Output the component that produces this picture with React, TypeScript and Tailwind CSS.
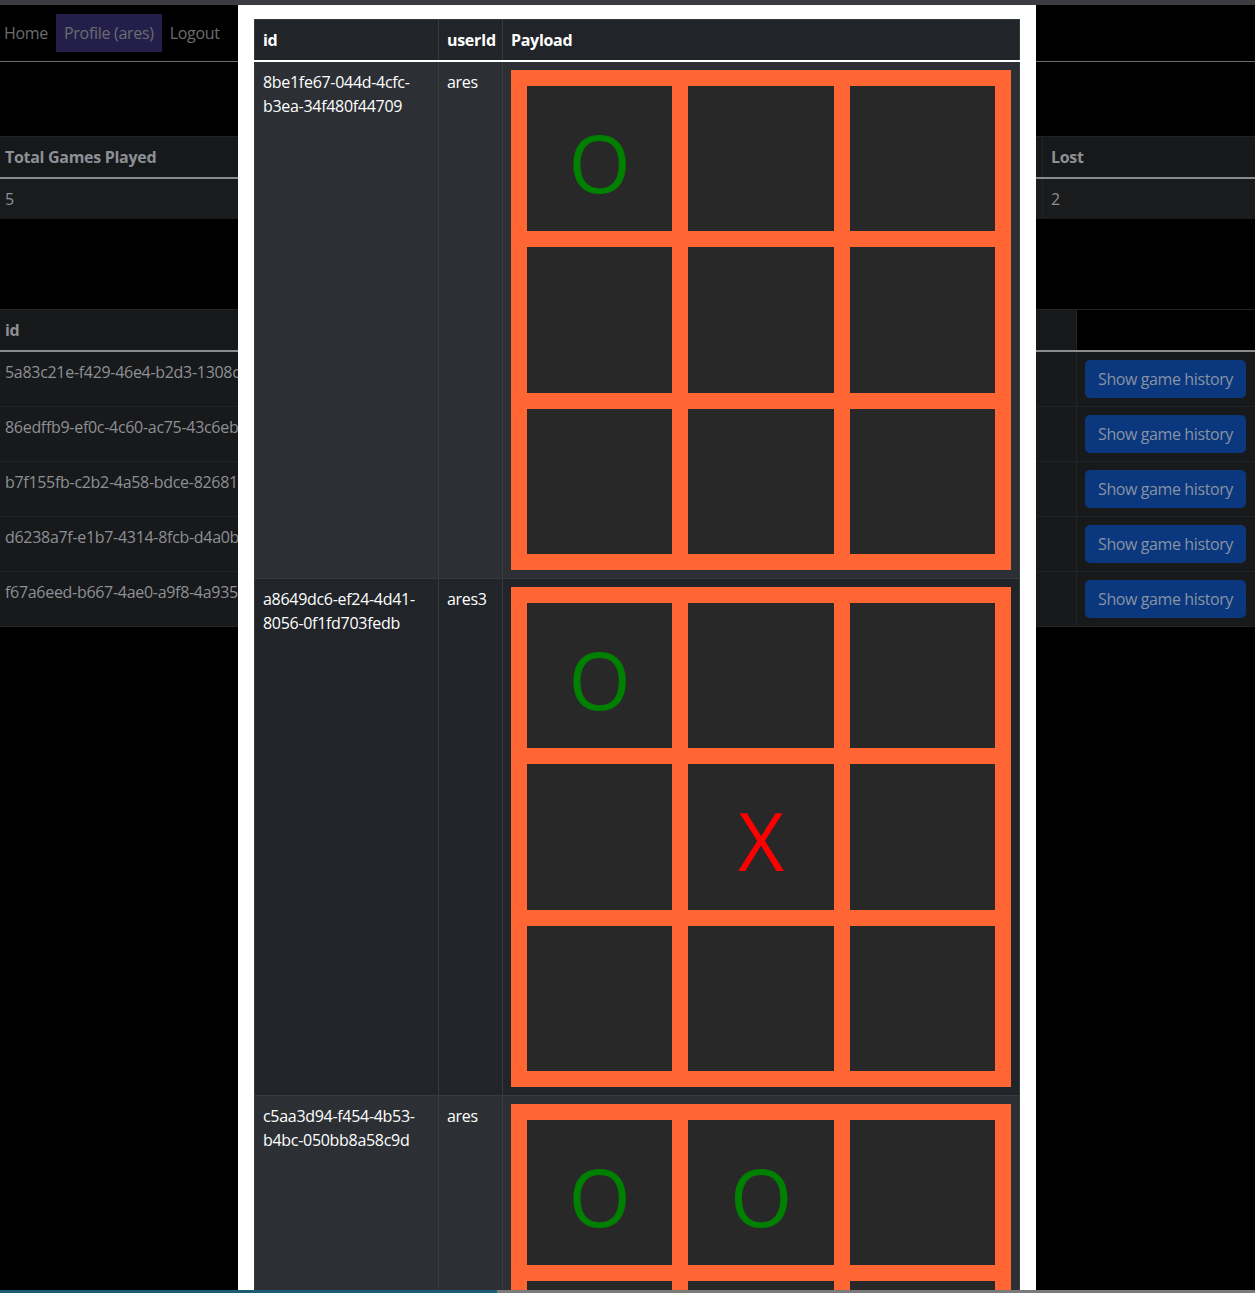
import React from "react";

const FONT = { fontFamily: '"Open Sans", "Noto Sans", sans-serif' };

const games = [
  { id: "8be1fe67-044d-4cfc-b3ea-34f480f44709", user: "ares", board: ["O", "", "", "", "", "", "", "", ""] },
  { id: "a8649dc6-ef24-4d41-8056-0f1fd703fedb", user: "ares3", board: ["O", "", "", "", "X", "", "", "", ""] },
  { id: "c5aa3d94-f454-4b53-b4bc-050bb8a58c9d", user: "ares", board: ["O", "O", "", "", "", "", "", "", ""] },
];

const bgIds = [
  "5a83c21e-f429-46e4-b2d3-1308c4a1e2f7",
  "86edffb9-ef0c-4c60-ac75-43c6eb91d0a2",
  "b7f155fb-c2b2-4a58-bdce-82681f3e0c4d",
  "d6238a7f-e1b7-4314-8fcb-d4a0b5c7e912",
  "f67a6eed-b667-4ae0-a9f8-4a935e2d7b10",
];

function Board({ cells }: { cells: string[] }) {
  return (
    <div className="w-[500px] h-[500px] bg-[#ff6633] p-4 grid grid-cols-3 grid-rows-3 gap-4">
      {cells.map((c, i) => (
        <div
          key={i}
          className={
            "bg-[#282828] flex items-center justify-center text-[80px] leading-none pt-[7px] tracking-normal " +
            (c === "X" ? "text-[#ff0000]" : "text-[#008000]")
          }
        >
          {c}
        </div>
      ))}
    </div>
  );
}

export default function App() {
  return (
    <div className="relative h-[1293px] overflow-hidden bg-black text-base tracking-[-0.3px]" style={FONT}>
      {/* top strip */}
      <div className="h-[5px] bg-[#3b3c3f]" />

      {/* nav */}
      <nav className="flex items-center pt-[9px] pb-[9px] border-b border-[#6e6e6e] -ml-[4px]">
        <a className="px-2 leading-6 py-[7px] text-[#6b6d70]">Home</a>
        <a className="px-2 leading-6 py-[7px] text-[#6b6d70] bg-[#241f4a]">Profile (ares)</a>
        <a className="px-2 leading-6 py-[7px] text-[#6b6d70]">Logout</a>
      </nav>

      {/* stats table */}
      <div className="mt-[74px] border-t border-[#222325]">
        <div className="grid grid-cols-[270px_390px_382px_1fr] bg-[#17181a] border-b-2 border-[#8a8b8c]">
          <div className="px-[5px] py-2 leading-6 font-bold text-[#8b9095]">Total Games Played</div>
          <div className="px-2 py-2 leading-6 font-bold text-[#8b9095] border-l border-[#222325]">Won</div>
          <div className="px-2 py-2 leading-6 font-bold text-[#8b9095] border-l border-[#222325]">Draw</div>
          <div className="px-2 py-2 leading-6 font-bold text-[#8b9095] border-l border-[#222325]">Lost</div>
        </div>
        <div className="grid grid-cols-[270px_390px_382px_1fr] bg-[#1a1b1d]">
          <div className="px-[5px] py-2 leading-6 text-[#8d9094]">5</div>
          <div className="px-2 py-2 leading-6 text-[#8d9094] border-l border-[#222325]">3</div>
          <div className="px-2 py-2 leading-6 text-[#8d9094] border-l border-[#222325]">0</div>
          <div className="px-2 py-2 leading-6 text-[#8d9094] border-l border-[#222325]">2</div>
        </div>
      </div>

      {/* games table */}
      <div className="mt-[90px] border-t border-[#222325]">
        <div className="grid grid-cols-[1fr_179px] border-b-2 border-[#8a8b8c]">
          <div className="px-[5px] py-2 leading-6 font-bold text-[#8b9095] bg-[#17181a]">id</div>
          <div className="border-l border-[#222325] bg-black" />
        </div>
        {bgIds.map((id, i) => (
          <div key={i} className="grid grid-cols-[1fr_179px] bg-[#18191b] border-b border-[#222325]">
            <div className="px-[5px] py-2 leading-6 text-[#8d9094] whitespace-nowrap overflow-hidden">{id}</div>
            <div className="border-l border-[#222325] px-2 py-2">
              <button className="h-[38px] w-[161px] rounded-[5px] bg-[#0a377e] text-[#8893a3] leading-6 whitespace-nowrap tracking-[-0.4px]">
                Show game history
              </button>
            </div>
          </div>
        ))}
      </div>

      {/* modal */}
      <div className="absolute left-[238px] top-[5px] w-[798px] bottom-0 bg-white px-4 pt-[14px] overflow-hidden">
        <div className="w-[766px] text-white">
          <div className="flex bg-[#212529] border-t border-l border-[#373b3e] font-bold">
            <div className="w-[184px] px-2 py-2 leading-6 border-r border-[#373b3e]">id</div>
            <div className="w-[64px] px-2 py-2 leading-6 border-r border-[#373b3e]">userId</div>
            <div className="flex-1 px-2 py-2 leading-6 border-r border-[#373b3e]">Payload</div>
          </div>
          <div className="h-[2px] bg-white" />
          {games.map((g, i) => (
            <div
              key={g.id}
              className={
                "flex border-l border-b border-[#373b3e] " + (i % 2 === 0 ? "bg-[#2c3035]" : "bg-[#212529]")
              }
            >
              <div className="w-[184px] px-2 py-2 leading-6 border-r border-[#373b3e]">{g.id}</div>
              <div className="w-[64px] px-2 py-2 leading-6 border-r border-[#373b3e]">{g.user}</div>
              <div className="flex-1 p-2 border-r border-[#373b3e]">
                <Board cells={g.board} />
              </div>
            </div>
          ))}
        </div>
      </div>

      {/* bottom strip */}
      <div className="absolute left-0 right-0 bottom-0 h-[3px] flex">
        <div className="w-[497px] bg-[#1e5b74]" />
        <div className="flex-1 bg-[#7b7b7b]" />
      </div>
    </div>
  );
}
